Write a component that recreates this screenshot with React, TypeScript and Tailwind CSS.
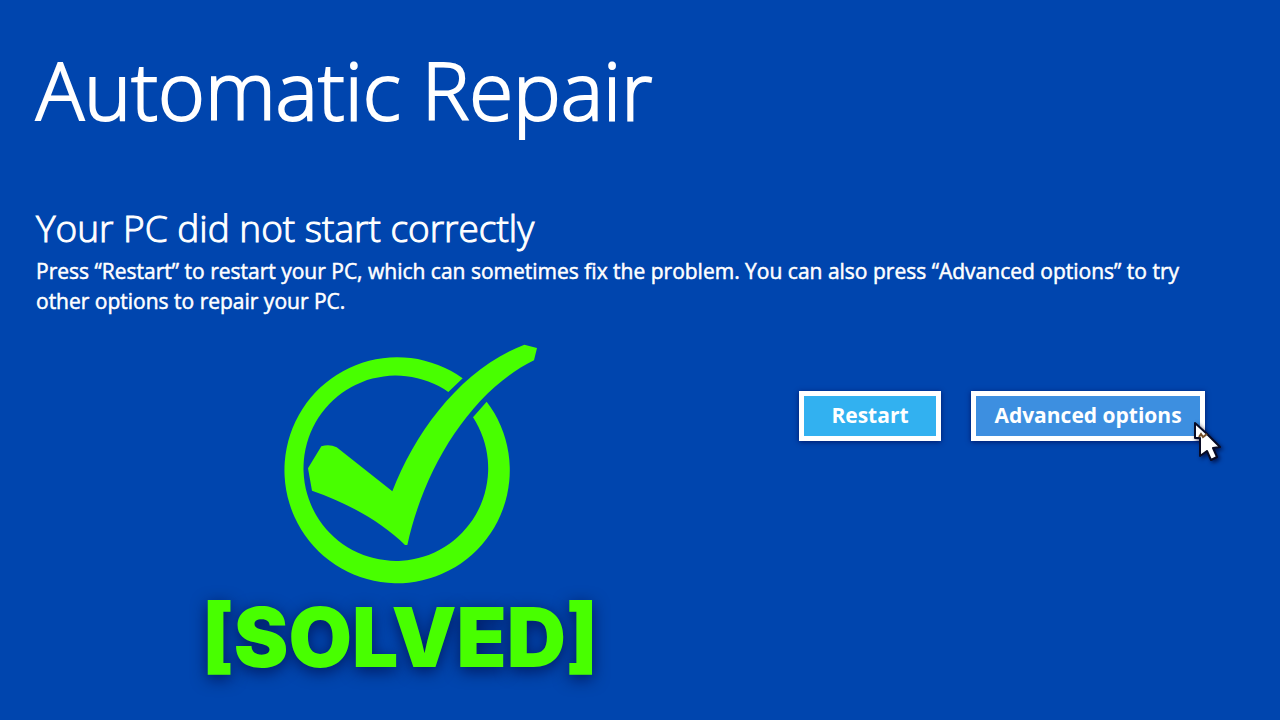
import type { ReactNode } from "react";
import clsx from "clsx";

interface ActionButtonProps {
  children: ReactNode;
  className?: string;
}

function ActionButton({ children, className }: ActionButtonProps) {
  return (
    <button
      type="button"
      className={clsx(
        "h-[50px] border-[5px] border-white text-[21px] font-bold text-white shadow-[0_1px_5px_rgba(0,15,90,0.8)]",
        className
      )}
    >
      {children}
    </button>
  );
}

function SolvedCheck() {
  return (
    <svg viewBox="69 45 768 720" className="h-[240px] w-[256px] fill-[#48ff00]" aria-hidden="true">
      {/* Ring, left open where the tick crosses it */}
      <path d="M611 148 A338 339 0 1 0 683 218 L642 265 A277 278 0 1 1 568 189 Z" />
      <path d="M187 352 Q211 344 233 355 L400 487 C470 305 610 118 796 47 L834 57 L825 94 C635 187 494 420 445 648 L438 648 C375 585 275 525 159 485 L147 418 Z" />
    </svg>
  );
}

function Cursor() {
  return (
    <svg
      viewBox="0 0 30 42"
      className="absolute -right-[18px] top-[30px] h-[42px] w-[30px] drop-shadow-[2px_2px_2px_rgba(0,0,40,0.7)]"
      aria-hidden="true"
    >
      <path
        d="M2 2 L13 12 L27 26 L20 27 L24 36 L18 39 L14 30 L7 35 L7 17 L2 17 Z"
        fill="white"
        stroke="#080b25"
        strokeWidth="2"
        strokeLinejoin="round"
      />
      <path d="M6 16 L8 13 L10 16 L14 13" fill="none" stroke="#75502a" strokeWidth="2" />
    </svg>
  );
}

export default function App() {
  return (
    <main className="min-h-screen bg-[#0045ae] px-9 pb-6 pt-9 font-['Open_Sans',sans-serif] text-white">
      <h1 className="text-[80px] font-light leading-[106px] [-webkit-text-stroke:2px_white]">Automatic Repair</h1>

      <section className="mt-[62px]">
        <h2 className="text-[37px] font-light leading-[48px] [-webkit-text-stroke:1px_white]">
          Your PC did not start correctly
        </h2>
        <p className="mt-1 max-w-[1160px] text-[21px] leading-[30px] [-webkit-text-stroke:0.5px_white]">
          Press “Restart” to restart your PC, which can sometimes fix the problem. You can also press “Advanced
          options” to try other options to repair your PC.
        </p>
      </section>

      <div className="mt-7 flex items-start justify-between">
        <div className="ml-[166px] text-[#48ff00]">
          <div className="pl-20">
            <SolvedCheck />
          </div>
          <p className="mt-2 font-['Inter',sans-serif] text-[82px] font-black leading-[92px] [text-shadow:0_4px_16px_rgba(0,0,50,0.65)]">
            [SOLVED]
          </p>
        </div>

        <div className="mr-[39px] mt-[47px] flex gap-[30px]">
          <ActionButton className="w-[142px] bg-[#32b1f0]">Restart</ActionButton>
          <div className="relative">
            <ActionButton className="w-[234px] bg-[#3d8fe0]">Advanced options</ActionButton>
            <Cursor />
          </div>
        </div>
      </div>
    </main>
  );
}
